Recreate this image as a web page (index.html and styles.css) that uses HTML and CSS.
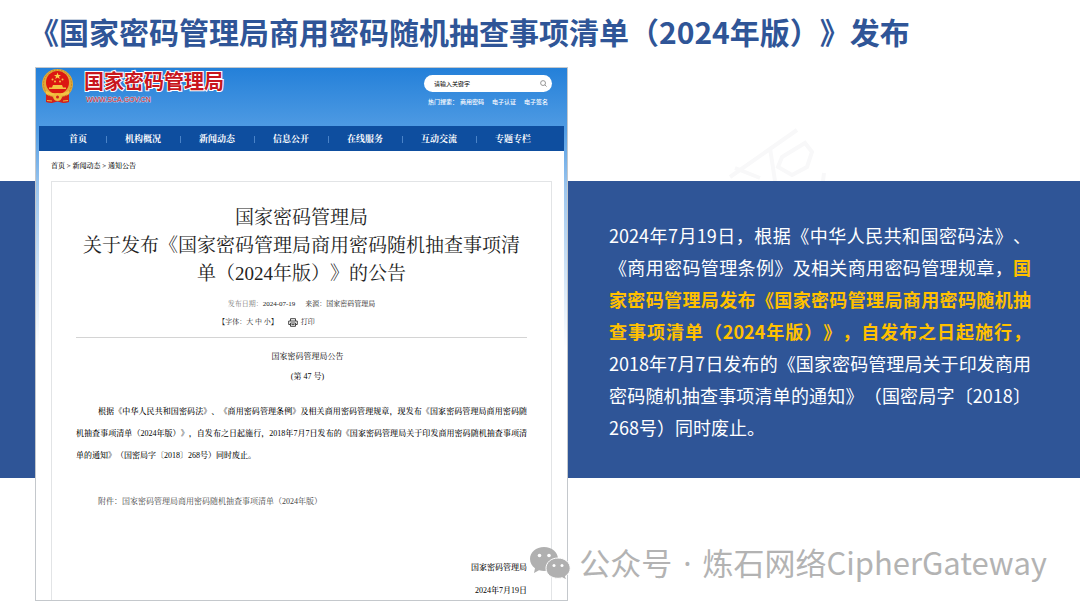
FILE: index.html
```html
<!DOCTYPE html>
<html lang="zh-CN">
<head>
<meta charset="utf-8">
<meta name="viewport" content="width=device-width, initial-scale=1">
<title>国家密码管理局商用密码随机抽查事项清单发布</title>
<link rel="stylesheet" href="styles.css">
</head>
<body>
<main class="slide">
  <h1 class="slide-title">《国家密码管理局商用密码随机抽查事项清单（2024年版）》发布</h1>

  <svg class="stamp" viewBox="0 0 110 56" aria-hidden="true">
    <path d="M5 52 L72 5 M45 23 L50 56 M10 43 L35 53 M57 32 L80 18 L87 27 L82 42 L67 50 L53 42 Z M98 56 L99 48"/>
  </svg>

  <div class="band"></div>

  <section class="site">
    <header class="site-head">
      <div class="brand">
        <svg class="emblem" viewBox="0 0 34 36" aria-hidden="true">
          <path d="M5 24 L28 24 L28 34 L22 35 L16.500 33.500 L11 35 L5 34 Z" fill="#d3201c"/>
          <ellipse cx="16.500" cy="16" rx="15.500" ry="15" fill="#e2a93a"/>
          <circle cx="16.500" cy="16" r="14" fill="none" stroke="#c98a1e" stroke-width="1" stroke-dasharray="2 1"/>
          <circle cx="16.500" cy="14.500" r="11.500" fill="#dc1712"/>
          <path d="M16.500 4.500 l.9 2.400 h2.600 l-2 1.600 .7 2.500 -2.200-1.500 -2.200 1.500 .7-2.500 -2-1.600 h2.600z" fill="#f8d24a"/>
          <g fill="#f3c443"><circle cx="11.500" cy="11.500" r="1"/><circle cx="14" cy="13.500" r="1"/><circle cx="21.500" cy="11.500" r="1"/><circle cx="19" cy="13.500" r="1"/></g>
          <path d="M8 21 h17 v-1.500 h-3 l-1-2.500 h-9 l-1 2.500 h-3z" fill="#f3c443"/>
          <path d="M5 23 Q16.500 28 28 23 L28 26 Q16.500 30 5 26Z" fill="#f3c443"/>
          <path d="M5 27 L12 29 L11 35 L5 34Z M28 27 L21 29 L22 35 L28 34Z" fill="#d3201c"/>
          <circle cx="16.500" cy="29" r="4" fill="#f0b93b"/>
          <circle cx="16.500" cy="29" r="1.500" fill="#d3201c"/>
          <path d="M6 32.500 L11 33 M27 32.500 L22 33" stroke="#f0b93b" stroke-width="1"/>
        </svg>
        <div class="brand-text">
          <p class="brand-name">国家密码管理局</p>
          <p class="brand-url">WWW.SCA.GOV.CN</p>
        </div>
      </div>
      <form class="search">
        <div class="search-box">
          <input class="search-input" type="text" aria-label="搜索" placeholder="请输入关键字">
          <button class="search-button" type="button" aria-label="搜索">
            <svg viewBox="0 0 8 8" aria-hidden="true"><circle cx="3.500" cy="3.500" r="2.800"/><path d="M5.600 5.600 L7.500 7.500"/></svg>
          </button>
        </div>
        <div class="hot"><span>热门搜索：</span><div class="hot-links"><a href="#">商用密码</a><a href="#">电子认证</a><a href="#">电子签名</a></div></div>
      </form>
    </header>

    <nav class="nav">
      <a href="#">首页</a><a href="#">机构概况</a><a href="#">新闻动态</a><a href="#">信息公开</a><a href="#">在线服务</a><a href="#">互动交流</a><a href="#">专题专栏</a>
    </nav>

    <div class="page">
      <p class="crumbs"><a href="#">首页</a> &gt; <a href="#">新闻动态</a> &gt; <a href="#">通知公告</a></p>
      <article class="notice">
        <h2 class="notice-title">国家密码管理局<br>关于发布《国家密码管理局商用密码随机抽查事项清单（2024年版）》的公告</h2>
        <div class="meta">
          <p class="meta-row"><span><span class="pale">发布日期：</span>2024-07-19</span><span>来源：国家密码管理局</span></p>
          <p class="meta-row meta-tools"><span>【字体：<a href="#">大</a> <a href="#">中</a> <a href="#">小</a>】</span>
            <a class="print" href="#"><svg viewBox="0 0 10 9" aria-hidden="true"><path d="M2.500 3V.7h5V3M2 6.500H.7V3h8.600v3.500H8M2.500 5h5v3.300h-5zM3.500 6.600h3"/></svg>打印</a></p>
        </div>
        <p class="issue">国家密码管理局公告</p>
        <p class="issue">(第 47 号)</p>
        <p class="notice-body">根据《中华人民共和国密码法》、《商用密码管理条例》及相关商用密码管理规章，现发布《国家密码管理局商用密码随机抽查事项清单（2024年版）》，自发布之日起施行，2018年7月7日发布的《国家密码管理局关于印发商用密码随机抽查事项清单的通知》（国密局字〔2018〕268号）同时废止。</p>
        <p class="attachment">附件：<a href="#">国家密码管理局商用密码随机抽查事项清单（2024年版）</a></p>
        <p class="sign">国家密码管理局</p>
        <p class="sign">2024年7月19日</p>
      </article>
    </div>
  </section>

  <p class="summary">2024年7月19日，根据《中华人民共和国密码法》、《商用密码管理条例》及相关商用密码管理规章，<strong>国家密码管理局发布《国家密码管理局商用密码随机抽查事项清单（2024年版）》，自发布之日起施行，</strong>2018年7月7日发布的《国家密码管理局关于印发商用密码随机抽查事项清单的通知》（国密局字〔2018〕268号）同时废止。</p>

  <div class="account">
    <svg class="wechat" viewBox="0 0 42 34" aria-hidden="true">
      <path d="M15 1C7 1 1 6.200 1 13c0 4 2 7 5 9.300L5 27l5-2.800c1.600.5 3.300.7 5 .7 8 0 14-5.300 14-12S23 1 15 1z"/>
      <path class="front" d="M29 12c-7 0-12 4.600-12 10.200C17 28 22 32.300 29 32.300c1.500 0 3-.2 4.200-.6l4.300 2.300-1-3.900c3-2 4.700-4.700 4.700-7.900C41.200 16.600 36 12 29 12z"/>
      <g class="eyes"><circle cx="10.500" cy="9.500" r="1.800"/><circle cx="20" cy="9.500" r="1.800"/><circle cx="25" cy="19.500" r="1.500"/><circle cx="33" cy="19.500" r="1.500"/></g>
    </svg>
    <p>公众号 <span class="dot">·</span> 炼石网络CipherGateway</p>
  </div>
</main>
</body>
</html>
```
FILE: styles.css
```css
* { box-sizing: border-box; }

body {
  margin: 0;
  background: #fff;
  font-family: "Noto Sans CJK SC", sans-serif;
  text-spacing-trim: space-all;
}

h1, h2, p { margin: 0; font-weight: inherit; }
a { color: inherit; text-decoration: none; }

.slide {
  position: relative;
  display: grid;
  grid-template-columns: 35px minmax(0, 533fr) 41px minmax(0, 422fr) 49px;
  grid-template-rows: 67px 114px auto 1fr;
  min-height: 100vh;
  padding-bottom: 7px;
  overflow: hidden;
}

.slide-title {
  grid-column: 1 / -1;
  grid-row: 1;
  padding: 10px 0 0 29px;
  color: #2f5597;
  font-size: 30px;
  line-height: 42px;
  font-weight: 700;
}

.stamp {
  grid-column: 4;
  grid-row: 2;
  align-self: end;
  width: 110px;
  height: 56px;
  margin-left: 116px;
  fill: none;
  stroke: #f8f8f9;
  stroke-width: 4;
}

.band {
  grid-column: 1 / -1;
  grid-row: 3;
  background: #2f5597;
}

.summary {
  grid-column: 4;
  grid-row: 3;
  padding: 38px 0 35px;
  color: #fff;
  font-size: 18px;
  line-height: 32px;
  text-align: justify;
}

.summary strong { color: #ffc000; font-weight: 700; }

/* government site card */
.site {
  grid-column: 2;
  grid-row: 2 / 5;
  display: flex;
  flex-direction: column;
  padding: 0 3px;
  border: 1px solid #c4c8cc;
  background: linear-gradient(#2480d9, #4f9be3 60px, #9cc6ee 120px, #fff 280px);
  color: #000;
  font-family: "Liberation Serif", "Noto Serif CJK SC", "Noto Sans CJK SC", serif;
  font-size: 8px;
}

.site-head {
  display: flex;
  justify-content: space-between;
  height: 58px;
  padding: 0 12px 0 2px;
  font-family: "Noto Sans CJK SC", sans-serif;
}

.brand { display: flex; gap: 9px; }
.emblem { width: 34px; height: 36px; }

.brand-name {
  color: #c8161d;
  font-size: 20px;
  line-height: 26px;
  font-weight: 700;
  -webkit-text-stroke: 2px #fff;
  paint-order: stroke fill;
}

.brand-url {
  padding-left: 2px;
  color: #c8161d;
  font-family: "Liberation Sans", sans-serif;
  font-size: 7px;
  line-height: 12px;
  -webkit-text-stroke: 1px #b9cdec;
  paint-order: stroke fill;
}

.search { width: 128px; padding-top: 7px; }

.search-box {
  display: flex;
  align-items: center;
  height: 17px;
  padding: 0 5px 0 10px;
  border-radius: 9px;
  background: #fff;
}

.search-input {
  flex: 1;
  min-width: 0;
  padding: 0;
  border: 0;
  outline: 0;
  background: none;
  font: 6px "Noto Sans CJK SC", sans-serif;
}

.search-input::placeholder { color: #000; }

.search-button {
  width: 7px;
  height: 7px;
  padding: 0;
  border: 0;
  background: none;
}

.search-button svg { display: block; fill: none; stroke: #888; stroke-width: 1; }

.hot {
  display: flex;
  justify-content: space-between;
  padding: 4px 4px 0;
  color: #fff;
  font-size: 6px;
  line-height: 12px;
  font-weight: 500;
}

.hot-links { display: flex; gap: 8px; }

.nav {
  display: flex;
  padding: 2px 0 0 11px;
  background: #0e4e9f;
  color: #fff;
  font-size: 9px;
  line-height: 23px;
  font-weight: 700;
}

.nav a { padding: 0 19px; }

.nav a + a {
  background: linear-gradient(#4a83c8, #4a83c8) 0 8px / 1px 7px no-repeat;
}

.page {
  flex: 1;
  display: flex;
  flex-direction: column;
  padding: 0 12px;
  background: #fff;
}

.crumbs { padding: 9px 0; font-size: 7px; line-height: 12px; font-weight: 500; }

.notice {
  flex: 1;
  padding: 22px 24px 0;
  border: 1px solid #e2e4e6;
  border-bottom: 0;
}

.notice-title {
  color: #222;
  font-size: 19px;
  line-height: 28px;
  text-align: center;
}

.meta {
  margin-top: 7px;
  padding-bottom: 6px;
  border-bottom: 1px solid #d4d4d4;
  color: #222;
  font-size: 7px;
  line-height: 18px;
}

.meta-row { display: flex; justify-content: center; gap: 10px; }
.meta-tools { padding-right: 70px; }
.pale { color: #777; }
.print { display: flex; align-items: center; gap: 3px; }
.print svg { width: 10px; height: 9px; fill: none; stroke: #444; stroke-width: 1; }

.issue { line-height: 20px; text-align: center; text-indent: 12px; }
.meta + .issue { margin-top: 9px; }

.notice-body {
  margin-top: 14px;
  line-height: 22px;
  font-weight: 500;
  text-align: justify;
  text-indent: 22px;
}

.attachment {
  margin: 24px 0 46px;
  color: #444;
  line-height: 22px;
  text-indent: 22px;
}

.sign { line-height: 18px; font-weight: 500; text-align: right; }
.sign + .sign { margin-top: 5px; }

/* account credit laid over the slide corner */
.account {
  position: absolute;
  right: 33px;
  bottom: 24px;
  display: flex;
  align-items: center;
  gap: 8px;
  color: #b3b3b3;
  font-size: 31px;
  line-height: 42px;
  white-space: nowrap;
}

.dot { padding: 0 4px; font-family: "Noto Sans", sans-serif; }
.wechat { width: 42px; height: 34px; fill: #b0b0b0; }
.front { stroke: #fff; stroke-width: 1; }
.eyes { fill: #fff; }
```
